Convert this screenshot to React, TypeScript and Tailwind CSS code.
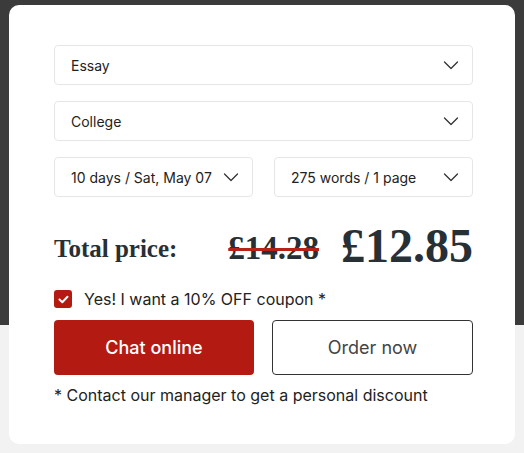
import { useState } from 'react'

const fieldFont = { fontFamily: 'Inter, "Liberation Sans", sans-serif' }

function Chevron() {
  return (
    <svg width="16" height="9" viewBox="0 0 16 9" fill="none" className="shrink-0">
      <polyline points="1.5,1 8,7.5 14.5,1" stroke="#333" strokeWidth="1.3" strokeLinecap="round" strokeLinejoin="round" />
    </svg>
  )
}

function Select({ label, className = '' }: { label: string; className?: string }) {
  return (
    <div
      className={`flex h-10 items-center justify-between rounded-[4px] border border-[#e6e6e6] bg-white pl-4 pr-[13px] text-[14px] text-[#222] ${className}`}
    >
      <span>{label}</span>
      <Chevron />
    </div>
  )
}

export default function App() {
  const [coupon, setCoupon] = useState(true)

  return (
    <div
      className="h-[453px] w-full overflow-hidden bg-[linear-gradient(to_bottom,#3b3b3b_325px,#f2f2f2_325px)] pt-[5px]"
      style={fieldFont}
    >
      <div className="ml-[9px] h-[439px] w-[506px] rounded-[10px] bg-white pl-[45px] pr-[42px] pt-10">
        <div className="flex flex-col gap-4">
          <Select label="Essay" />
          <Select label="College" />
          <div className="flex gap-[21px]">
            <Select label="10 days / Sat, May 07" className="w-[199px]" />
            <Select label="275 words / 1 page" className="flex-1" />
          </div>
        </div>

        <div
          className="mt-[16px] flex h-[64px] items-center justify-between text-[#263035]"
          style={{ fontFamily: '"Liberation Serif", "DejaVu Serif", serif' }}
        >
          <span className="pt-[8px] text-[25px] font-bold">Total price:</span>
          <div className="flex items-center gap-[22px]">
            <span className="pt-[6px] text-[33px] font-bold leading-none line-through decoration-[#b3231a] decoration-[3px]">
              £14.28
            </span>
            <span className="pt-[2px] text-[48px] font-bold leading-none">£12.85</span>
          </div>
        </div>

        <label className="mt-[13px] flex cursor-pointer items-center gap-3 text-[16px] text-[#222]">
          <button
            type="button"
            onClick={() => setCoupon(!coupon)}
            className="flex h-[18px] w-[18px] items-center justify-center rounded-[3px] bg-[#b31b12]"
          >
            {coupon && (
              <svg width="11" height="9" viewBox="0 0 11 9" fill="none">
                <polyline points="1.5,4.5 4.3,7.2 9.5,1.8" stroke="white" strokeWidth="2" strokeLinecap="round" strokeLinejoin="round" />
              </svg>
            )}
          </button>
          <span className="leading-[18px]">Yes! I want a 10% OFF coupon *</span>
        </label>

        <div className="mt-3 flex gap-[18px]">
          <button className="h-[55px] w-[200px] rounded-[4px] bg-[#b31b12] text-[18px] font-medium text-white">
            Chat online
          </button>
          <button className="h-[55px] flex-1 rounded-[4px] border border-[#333] bg-white text-[18px] text-[#444]">
            Order now
          </button>
        </div>

        <p className="mt-[9px] text-[16px] leading-[22px] text-[#222]">
          * Contact our manager to get a personal discount
        </p>
      </div>
    </div>
  )
}
